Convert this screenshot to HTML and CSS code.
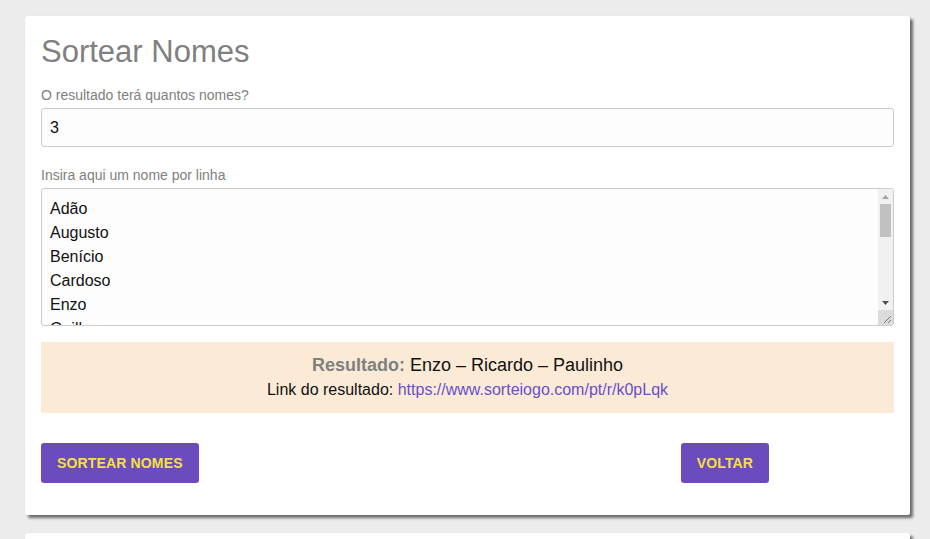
FILE: index.html
```html
<!DOCTYPE html>
<html lang="pt">
<head>
<meta charset="utf-8">
<title>Sortear Nomes</title>
<link rel="stylesheet" href="styles.css">
</head>
<body>
<div class="page">
  <section class="card">
    <h1 class="title">Sortear Nomes</h1>
    <label class="label" for="qtd">O resultado terá quantos nomes?</label>
    <input class="field" id="qtd" type="text" value="3">
    <label class="label label-gap" for="nomes">Insira aqui um nome por linha</label>
    <div class="area-box">
      <textarea class="area" id="nomes">Adão
Augusto
Benício
Cardoso
Enzo
Guilherme
Henrique
Isabela
João
Lucas
Marcos
Paulinho
Pedro
Ricardo
Sofia
Tiago
Vitor</textarea>
      <div class="sbar">
        <div class="sbtn">
          <svg width="7" height="4" viewBox="0 0 7 4"><path d="M0 4 L3.5 0 L7 4 Z" fill="#a3a3a3"/></svg>
        </div>
        <div class="strack"><div class="sthumb"></div></div>
        <div class="sbtn">
          <svg width="7" height="4" viewBox="0 0 7 4"><path d="M0 0 L7 0 L3.5 4 Z" fill="#505050"/></svg>
        </div>
        <div class="scorner">
          <svg width="15" height="15" viewBox="0 0 15 15"><path d="M13 6 L6 13 M13 10 L10 13" stroke="#777" stroke-width="1" fill="none"/></svg>
        </div>
      </div>
    </div>
    <div class="result">
      <div class="result-line"><b class="result-label">Resultado:</b> Enzo – Ricardo – Paulinho</div>
      <div class="result-link">Link do resultado: <a href="#">https://www.sorteiogo.com/pt/r/k0pLqk</a></div>
    </div>
    <div class="actions">
      <div><button class="btn">Sortear Nomes</button></div>
      <div><button class="btn">Voltar</button></div>
    </div>
  </section>
  <section class="card card-next"></section>
</div>
</body>
</html>
```
FILE: styles.css
```css
html, body {
  margin: 0;
  padding: 0;
  background: #ececec;
  font-family: "Liberation Sans", Arial, sans-serif;
  overflow: hidden;
}
.page {
  padding: 16px 20px 0 25px;
  display: flex;
  flex-direction: column;
  gap: 18px;
}
.card {
  background: #fff;
  border-radius: 2px;
  box-shadow: 0 0 1px rgba(0,0,0,0.15), 3px 3px 3px rgba(0,0,0,0.55);
  padding: 16px 16px 32px 16px;
  display: flex;
  flex-direction: column;
}
.card-next {
  height: 40px;
  padding: 0;
}
.title {
  margin: 2px 0 15px 0;
  font-size: 31px;
  line-height: 36px;
  font-weight: normal;
  color: #808080;
}
.label {
  font-size: 14px;
  line-height: 20px;
  color: #808080;
  margin-bottom: 3px;
}
.label-gap {
  margin-top: 18px;
}
.field {
  box-sizing: border-box;
  width: 100%;
  height: 39px;
  border: 1px solid #ccc;
  border-radius: 3px;
  background: #fdfdfd;
  font-family: "Liberation Sans", Arial, sans-serif;
  font-size: 16px;
  color: #111;
  padding: 0 8px;
  margin: 0;
  outline: none;
}
.area-box {
  box-sizing: border-box;
  height: 138px;
  border: 1px solid #ccc;
  border-radius: 3px;
  background: #fdfdfd;
  display: flex;
  overflow: hidden;
}
.area {
  flex: 1;
  min-width: 0;
  border: none;
  background: transparent;
  font-family: "Liberation Sans", Arial, sans-serif;
  font-size: 16px;
  color: #111;
  padding: 8px 8px 0;
  margin: 0;
  line-height: 24px;
  resize: none;
  overflow: hidden;
  outline: none;
}
.sbar {
  width: 15px;
  flex: 0 0 15px;
  background: #f1f1f1;
  display: flex;
  flex-direction: column;
}
.sbtn {
  height: 15px;
  flex: 0 0 15px;
  display: flex;
  align-items: center;
  justify-content: center;
}
.strack {
  flex: 1;
  padding: 0 2px;
}
.sthumb {
  height: 33px;
  background: #c1c1c1;
}
.scorner {
  height: 15px;
  flex: 0 0 15px;
  background: #dcdcdc;
  display: flex;
}
.result {
  margin-top: 16px;
  background: #fbebd6;
  padding: 11px 16px 11px;
  text-align: center;
  color: #111;
}
.result-line {
  font-size: 18px;
  line-height: 24px;
}
.result-label {
  color: #808080;
}
.result-link {
  margin-top: 1px;
  font-size: 16px;
  line-height: 24px;
}
.result-link a {
  color: #6a4fcb;
  text-decoration: none;
}
.actions {
  margin-top: 30px;
  display: grid;
  grid-template-columns: 3fr 1fr;
}
.btn {
  height: 40px;
  padding: 0 16px;
  border: none;
  border-radius: 3px;
  background: #6a4cbf;
  color: #f7e03c;
  font-family: "Liberation Sans", Arial, sans-serif;
  font-weight: bold;
  font-size: 14px;
  letter-spacing: 0.15px;
  text-transform: uppercase;
  cursor: pointer;
}
```
